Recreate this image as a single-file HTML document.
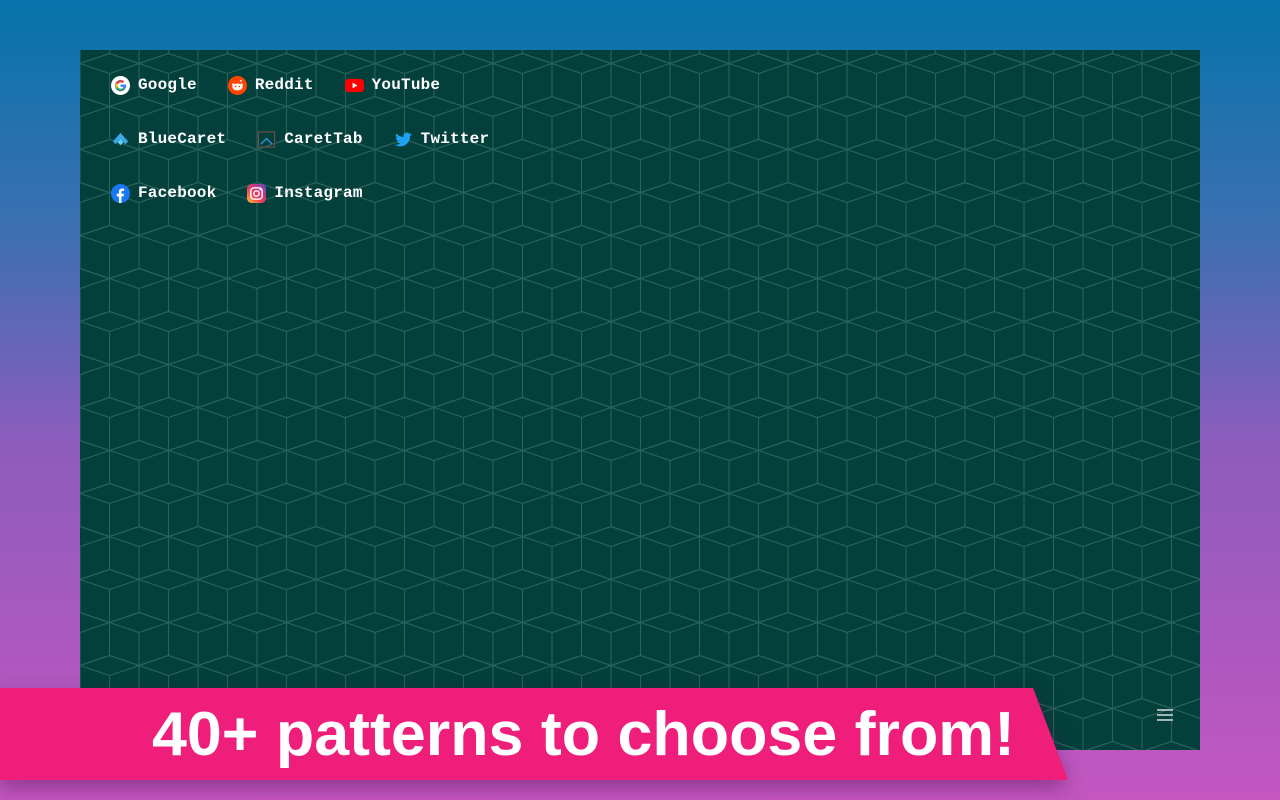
<!DOCTYPE html>
<html><head><meta charset="utf-8"><style>
html,body{margin:0;padding:0}
body{width:1280px;height:800px;overflow:hidden;position:relative;background:linear-gradient(180deg,#0673aa 0%,#3f6fb3 30%,#8c5cbd 55%,#c456c0 100%);font-family:"Liberation Mono",monospace}
#box{position:absolute;left:80px;top:50px;width:1120px;height:700px;background:#033f3b;overflow:hidden}
#box svg.bg{position:absolute;left:0;top:0}
.row{position:absolute;left:31px;display:flex;align-items:center;color:#fff;font-weight:bold;font-size:16px;letter-spacing:.2px;height:20px}
.lk{display:flex;align-items:center;margin-right:31px}
.lk svg{width:19px;height:19px;margin-right:8px}
#ham{position:absolute;left:1077px;top:659px;width:16px}
#ham div{height:2px;background:#9fb6b2;margin-bottom:3px}
#banner{position:absolute;left:0;top:688px;width:1070px;height:92px;filter:drop-shadow(0 8px 10px rgba(80,20,80,.45))}
</style></head><body>
<div id="box">
<svg class="bg" width="1120" height="700">
<defs><pattern id="p" width="59" height="86" patternUnits="userSpaceOnUse" x="0" y="-39.5">
<g fill="none" stroke="#286258" stroke-width="1.1">
<g id="c"><path d="M0,0 L29.5,10 L0,20 L-29.5,10 Z M0,20 V53 M-29.5,10 V43 M29.5,10 V43 M-29.5,43 L0,53 L29.5,43"/></g>
<use href="#c" x="59"/><use href="#c" x="29.5" y="43"/><use href="#c" x="29.5" y="-43"/>
<use href="#c" y="86"/><use href="#c" x="59" y="86"/><use href="#c" y="-86"/><use href="#c" x="59" y="-86"/>
</g></pattern></defs>
<rect width="1120" height="700" fill="url(#p)"/>
</svg>
<div class="row" style="top:25px">
<span class="lk"><svg viewBox="0 0 20 20"><circle cx="10" cy="10" r="10" fill="#fff"/><path d="M15.5 9H10v2.4h3.1a3.3 3.3 0 0 1-3.1 2.1 3.5 3.5 0 1 1 2.3-6.1l1.7-1.7A6 6 0 1 0 16 10c0-.3 0-.7-.5-1z" fill="#4285f4"/><path d="M5.3 7.2 7.3 8.6A3.5 3.5 0 0 1 12.3 7.4L14 5.7A6 6 0 0 0 5.3 7.2z" fill="#ea4335"/><path d="M5.3 12.8A6 6 0 0 0 14 14.5l-1.9-1.5a3.5 3.5 0 0 1-4.9-1.6z" fill="#34a853"/><path d="M5.3 7.2a6 6 0 0 0 0 5.6l1.9-1.4a3.5 3.5 0 0 1 0-2.8z" fill="#fbbc05"/></svg>Google</span>
<span class="lk"><svg viewBox="0 0 20 20"><circle cx="10" cy="10" r="10" fill="#ff4500"/><ellipse cx="10" cy="11.5" rx="5.5" ry="3.6" fill="#fff"/><circle cx="14.5" cy="9" r="1.3" fill="#fff"/><circle cx="5.5" cy="9" r="1.3" fill="#fff"/><circle cx="13.5" cy="5" r="1" fill="#fff"/><circle cx="8" cy="11" r=".9" fill="#ff4500"/><circle cx="12" cy="11" r=".9" fill="#ff4500"/></svg>Reddit</span>
<span class="lk"><svg viewBox="0 0 20 20"><rect x="0" y="3" width="20" height="14" rx="4" fill="#f00"/><path d="M8 7l5 3-5 3z" fill="#fff"/></svg>YouTube</span>
</div>
<div class="row" style="top:79px">
<span class="lk"><svg viewBox="0 0 20 20"><path d="M10 3l8 9-3 3-5-6-5 6-3-3z" fill="#3aa9e8"/><path d="M10 9l3 4-3 3-3-3z" fill="#5fd3f5"/></svg>BlueCaret</span>
<span class="lk"><svg viewBox="0 0 20 20"><rect x="1.5" y="2" width="17" height="16" fill="none" stroke="#6a4b45" stroke-width="1.3"/><path d="M4 15l6-6 6 6" fill="none" stroke="#2a8fd0" stroke-width="1.6"/></svg>CaretTab</span>
<span class="lk"><svg viewBox="0 0 20 20"><path d="M19 4.5c-.7.3-1.4.5-2.1.6.8-.5 1.3-1.2 1.6-2-.7.4-1.5.7-2.3.9a3.6 3.6 0 0 0-6.2 3.3C6.9 7.1 4.2 5.7 2.4 3.5c-1 1.7-.4 3.8 1.1 4.8-.6 0-1.1-.2-1.600-.4 0 1.7 1.2 3.2 2.9 3.6-.5.1-1.1.2-1.6.1.5 1.5 1.8 2.5 3.4 2.5A7.3 7.3 0 0 1 1 15.6 10.3 10.3 0 0 0 16.9 6.4c.8-.5 1.5-1.2 2.1-1.9z" fill="#1da1f2"/></svg>Twitter</span>
</div>
<div class="row" style="top:133px">
<span class="lk"><svg viewBox="0 0 20 20"><circle cx="10" cy="10" r="10" fill="#1877f2"/><path d="M11 20v-7h2.3l.4-2.7H11V8.6c0-.8.3-1.3 1.4-1.3h1.4V4.9c-.3 0-1.1-.1-2.1-.1-2.1 0-3.4 1.2-3.4 3.5v2H6v2.7h2.3v7z" fill="#fff"/></svg>Facebook</span>
<span class="lk"><svg viewBox="0 0 20 20"><defs><linearGradient id="ig" x1="0" y1="1" x2="1" y2="0"><stop offset="0" stop-color="#fdc830"/><stop offset=".4" stop-color="#f1405d"/><stop offset=".7" stop-color="#c13584"/><stop offset="1" stop-color="#5851db"/></linearGradient></defs><rect width="20" height="20" rx="5" fill="url(#ig)"/><rect x="4" y="4" width="12" height="12" rx="3.5" fill="none" stroke="#fff" stroke-width="1.5"/><circle cx="10" cy="10" r="2.8" fill="none" stroke="#fff" stroke-width="1.5"/><circle cx="14" cy="6" r=".9" fill="#fff"/></svg>Instagram</span>
</div>
<div id="ham"><div></div><div></div><div></div></div>
</div>
<svg id="banner" width="1070" height="92" viewBox="0 0 1070 92">
<path d="M0 0H1033L1068 92H0Z" fill="#ee1e7a"/>
<text x="152" y="67" textLength="863" lengthAdjust="spacingAndGlyphs" fill="#fff" font-family="Liberation Sans, sans-serif" font-weight="bold" font-size="62">40+ patterns to choose from!</text>
</svg>
</body></html>
